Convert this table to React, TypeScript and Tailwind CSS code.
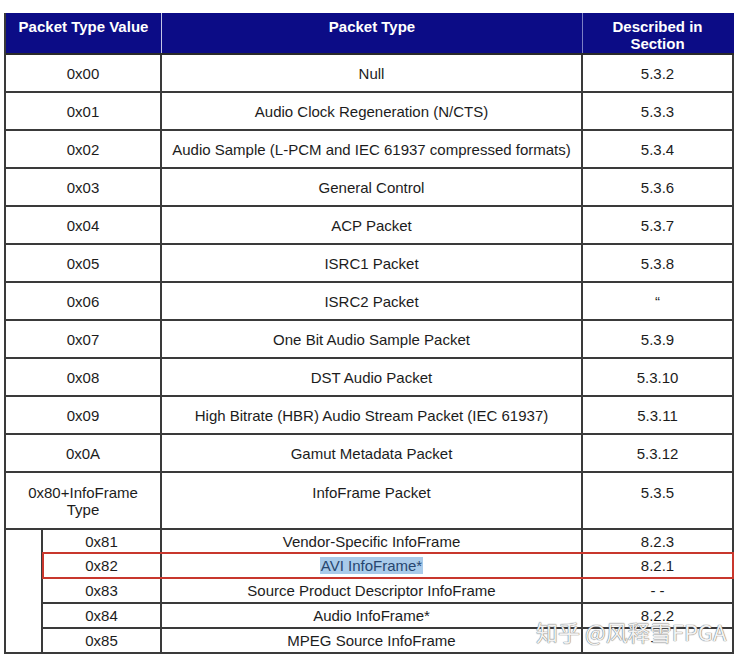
import React from "react";

const rows: [string, string, string][] = [
  ["0x00", "Null", "5.3.2"],
  ["0x01", "Audio Clock Regeneration (N/CTS)", "5.3.3"],
  ["0x02", "Audio Sample (L-PCM and IEC 61937 compressed formats)", "5.3.4"],
  ["0x03", "General Control", "5.3.6"],
  ["0x04", "ACP Packet", "5.3.7"],
  ["0x05", "ISRC1 Packet", "5.3.8"],
  ["0x06", "ISRC2 Packet", "\u201C"],
  ["0x07", "One Bit Audio Sample Packet", "5.3.9"],
  ["0x08", "DST Audio Packet", "5.3.10"],
  ["0x09", "High Bitrate (HBR) Audio Stream Packet (IEC 61937)", "5.3.11"],
  ["0x0A", "Gamut Metadata Packet", "5.3.12"],
];

const subRows: [string, string, string][] = [
  ["0x81", "Vendor-Specific InfoFrame", "8.2.3"],
  ["0x82", "AVI InfoFrame*", "8.2.1"],
  ["0x83", "Source Product Descriptor InfoFrame", "- -"],
  ["0x84", "Audio InfoFrame*", "8.2.2"],
  ["0x85", "MPEG Source InfoFrame", "- -"],
];

export default function App() {
  return (
    <div
      className="relative w-[742px] h-[661px] bg-white overflow-hidden text-[#1c1c1c]"
      style={{ fontFamily: '"Liberation Sans", Arial, sans-serif' }}
    >
      <div className="relative ml-[4px] mt-[13px] w-[730px] border-l-2 border-[#3a3a3a] text-[15px] leading-[17px]">
        {/* header */}
        <div className="flex h-[42px] bg-[#0c0c86] border-b-2 border-[#2a2a2a] text-white font-bold">
          <div className="w-[156px] border-r border-[#c4c6e6] flex justify-center pt-[5px] text-center">
            Packet Type Value
          </div>
          <div className="w-[421px] border-r border-[#7c7fc4] flex justify-center pt-[5px] text-center">
            Packet Type
          </div>
          <div className="w-[151px] border-r-2 border-[#0c0c86] flex justify-center pt-[5px] text-center">
            Described in
            <br />
            Section
          </div>
        </div>

        {rows.map(([v, t, s]) => (
          <div key={v} className="flex h-[38px] border-b-2 border-[#3a3a3a]">
            <div className="w-[156px] border-r-2 border-[#3a3a3a] flex items-center justify-center">{v}</div>
            <div className="w-[421px] border-r-2 border-[#3a3a3a] flex items-center justify-center">{t}</div>
            <div className="w-[151px] border-r-2 border-[#3a3a3a] flex items-center justify-center">{s}</div>
          </div>
        ))}

        <div className="flex h-[57px] border-b-2 border-[#3a3a3a]">
          <div className="w-[156px] border-r-2 border-[#3a3a3a] pt-[11px] text-center">
            0x80+InfoFrame
            <br />
            Type
          </div>
          <div className="w-[421px] border-r-2 border-[#3a3a3a] pt-[11px] text-center">InfoFrame Packet</div>
          <div className="w-[151px] border-r-2 border-[#3a3a3a] pt-[11px] text-center">5.3.5</div>
        </div>

        <div className="flex">
          <div className="w-[37px] border-r-2 border-b-2 border-[#3a3a3a]" />
          <div className="flex flex-col w-[691px]">
            {subRows.map(([v, t, s], i) => (
              <div
                key={v}
                className={`flex border-b-2 border-[#3a3a3a] ${i === 0 ? "h-[24px]" : "h-[25px]"}`}
              >
                <div className="w-[119px] border-r-2 border-[#3a3a3a] flex items-center justify-center">{v}</div>
                <div className="w-[421px] border-r-2 border-[#3a3a3a] flex items-center justify-center">
                  {i === 1 ? (
                    <span className="bg-[#a9cbea] text-[#27466f] px-[1px]">{t}</span>
                  ) : (
                    t
                  )}
                </div>
                <div className="w-[151px] border-r-2 border-[#3a3a3a] flex items-center justify-center">{s}</div>
              </div>
            ))}
          </div>
        </div>

        {/* red highlight box */}
        <div className="absolute left-[36px] top-[539px] w-[692px] h-[27px] border-2 border-[#c8372d] pointer-events-none" />
      </div>

      {/* watermark */}
      <div
        className="absolute left-[536px] top-[618px] text-[22px] leading-[26px] text-[#f2f2f2] whitespace-nowrap [text-shadow:0_0_1px_#6b6b6b,0_0_1px_#6b6b6b]"
        style={{ fontFamily: '"Noto Sans CJK SC", "Liberation Sans", sans-serif' }}
      >
        知乎 @风释雪FPGA
      </div>
    </div>
  );
}
